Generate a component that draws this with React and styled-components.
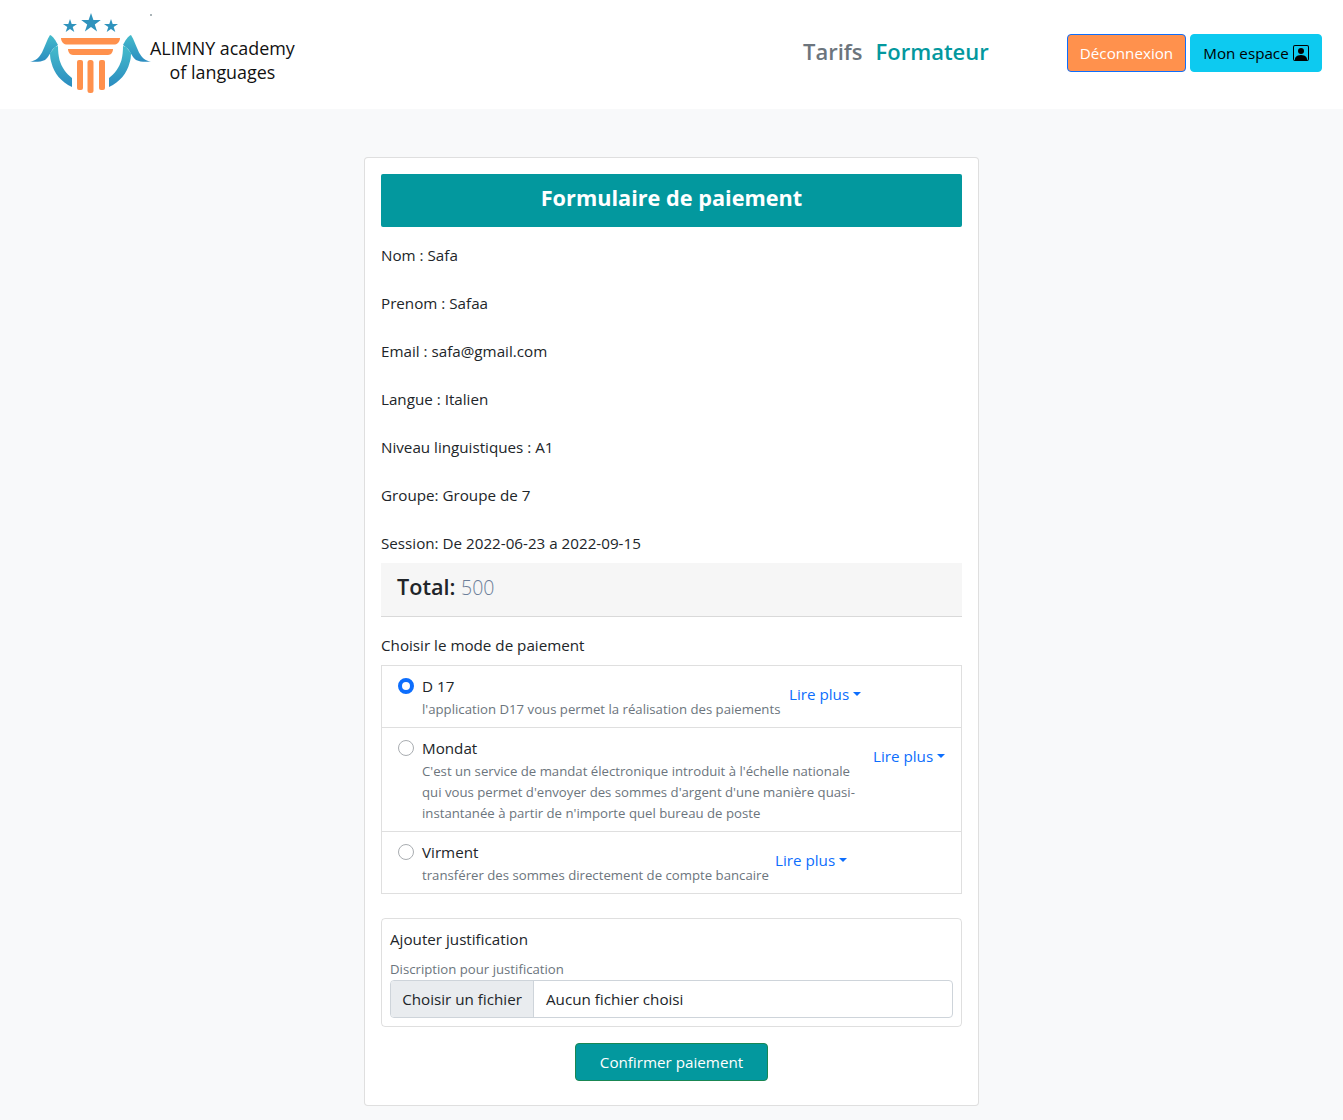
import React from 'react';
import styled, { createGlobalStyle } from 'styled-components';

const fields = [
  'Nom : Safa',
  'Prenom : Safaa',
  'Email : safa@gmail.com',
  'Langue : Italien',
  'Niveau linguistiques : A1',
  'Groupe: Groupe de 7',
];

const modes = [
  {
    name: 'D 17',
    checked: true,
    textWidth: '359px',
    lines: ["l'application D17 vous permet la réalisation des paiements"],
  },
  {
    name: 'Mondat',
    textWidth: '443px',
    lines: [
      "C'est un service de mandat électronique introduit à l'échelle nationale",
      "qui vous permet d'envoyer des sommes d'argent d'une manière quasi-",
      "instantanée à partir de n'importe quel bureau de poste",
    ],
  },
  {
    name: 'Virment',
    textWidth: '345px',
    lines: ['transférer des sommes directement de compte bancaire'],
  },
];

// viewBox uses page coordinates, so it reads straight off the screenshot
function Logo() {
  return (
    <svg width="122" height="84" viewBox="30 12 122 84" aria-hidden="true">
      <defs>
        <linearGradient id="wing" x1="0" y1="0" x2="0" y2="1">
          <stop offset="0" stopColor="#45bccb" />
          <stop offset="1" stopColor="#2b8cc0" />
        </linearGradient>
      </defs>
      <g fill="#2f93bd">
        <path d="M70 19l1.7 5h5.3l-4.3 3.1 1.6 5-4.3-3.1-4.3 3.1 1.6-5-4.3-3.1h5.3z" />
        <path d="M91 13l2.4 7h7.4l-6 4.4 2.3 7.1-6.1-4.4-6.1 4.4 2.3-7.1-6-4.4h7.4z" />
        <path d="M111 19l1.7 5h5.3l-4.3 3.1 1.6 5-4.3-3.1-4.3 3.1 1.6-5-4.3-3.1h5.3z" />
      </g>
      <g fill="url(#wing)">
        <path d="M30 61.5c6-.5 9-4 12-9 3-6 5-13 8-17.5 3 1 6 6 8 10l-5 4c-3 4-5 9-8 11-4 2-10 2-15 1.5z" />
        <path d="M50 53l5-6 3-1c0 5 .5 10 1.5 14 2 7 7 14 12.5 18v9C61 82 54 73 51.5 63c-1-3-1.5-6-1.5-10z" />
        <path d="M151 61.5c-6-.5-9-4-12-9-3-6-5-13-8-17.5-3 1-6 6-8 10l5 4c3 4 5 9 8 11 4 2 10 2 15 1.5z" />
        <path d="M131 53l-5-6-3-1c0 5-.5 10-1.5 14-2 7-7 14-12.5 18v9c11-5 18-14 20.5-24 1-3 1.5-6 1.5-10z" />
      </g>
      <g fill="#ff914d">
        <path d="M61 38h59c0 3-2 6-5 6.5H66c-3-.5-5-3.5-5-6.500z" />
        <path d="M68 49h45c0 3-2 6-5 6H73c-3 0-5-3-5-6z" />
        <rect x="77" y="60" width="6" height="30" rx="2" />
        <rect x="87.5" y="60" width="6" height="33" rx="2.5" />
        <rect x="99" y="60" width="6" height="30" rx="2" />
      </g>
    </svg>
  );
}

function CaretToggle() {
  return (
    <ReadMore>
      Lire plus<Caret />
    </ReadMore>
  );
}

export default function App() {
  return (
    <>
      <GlobalStyle />
      <Navbar>
        <Brand>
          <Logo />
          <BrandText>
            <span>ALIMNY academy</span>
            <span>of languages</span>
          </BrandText>
          <Speck />
        </Brand>
        <NavLinks>
          <NavLink>Tarifs</NavLink>
          <NavLink $active>Formateur</NavLink>
        </NavLinks>
        <NavButtons>
          <LogoutButton>Déconnexion</LogoutButton>
          <SpaceButton>
            Mon espace
            <svg width="16" height="16" viewBox="0 0 16 16" fill="currentColor" aria-hidden="true">
              <path d="M8 9a3 3 0 1 0 0-6 3 3 0 0 0 0 6z" />
              <path d="M2 0a2 2 0 0 0-2 2v12a2 2 0 0 0 2 2h12a2 2 0 0 0 2-2V2a2 2 0 0 0-2-2H2zm12 1a1 1 0 0 1 1 1v12a1 1 0 0 1-1 1v-1c0-1-1-4-6-4s-6 3-6 4v1a1 1 0 0 1-1-1V2a1 1 0 0 1 1-1h12z" />
            </svg>
          </SpaceButton>
        </NavButtons>
      </Navbar>
      <Page>
        <Card>
          <Title>Formulaire de paiement</Title>
          {fields.map((f) => (
            <Field key={f}>{f}</Field>
          ))}
          <SessionLine>Session: De 2022-06-23 a 2022-09-15</SessionLine>
          <TotalBar>
            <strong>Total:</strong> <TotalValue>500</TotalValue>
          </TotalBar>
          <ModeLabel>Choisir le mode de paiement</ModeLabel>
          <ModeList>
            {modes.map((m) => (
              <ModeItem key={m.name}>
                <Radio $checked={m.checked} />
                <ModeBody $width={m.textWidth}>
                  <ModeName>{m.name}</ModeName>
                  {m.lines.map((l) => (
                    <ModeText key={l}>{l}</ModeText>
                  ))}
                </ModeBody>
                <CaretToggle />
              </ModeItem>
            ))}
          </ModeList>
          <JustifBox>
            <JustifTitle>Ajouter justification</JustifTitle>
            <JustifHint>Discription pour justification</JustifHint>
            <FileInput>
              <FileButton>Choisir un fichier</FileButton>
              <FileName>Aucun fichier choisi</FileName>
            </FileInput>
          </JustifBox>
          <ConfirmRow>
            <ConfirmButton>Confirmer paiement</ConfirmButton>
          </ConfirmRow>
        </Card>
      </Page>
    </>
  );
}

const GlobalStyle = createGlobalStyle`
  * { box-sizing: border-box; }
  body {
    margin: 0;
    background: #f8f9fa;
    color: #212529;
    font-family: "Open Sans", "Noto Sans", "Liberation Sans", sans-serif;
    font-size: 15.2px;
    line-height: 24px;
  }
`;

const Navbar = styled.nav`
  height: 109px;
  background: #fff;
  display: flex;
  align-items: center;
  padding: 0 21px 0 30px;
`;

const Brand = styled.div`
  position: relative;
  display: flex;
  align-items: center;
  width: 773px;
  margin-top: -1px;
`;

const BrandText = styled.div`
  display: flex;
  flex-direction: column;
  align-items: center;
  margin: 12px 0 0 -2px;
  color: #111;
  font-size: 17.9px;
  line-height: 24.5px;
`;

const Speck = styled.i`
  position: absolute;
  left: 120px;
  top: 2px;
  width: 2px;
  height: 2px;
  background: #aab4b8;
`;

const NavLinks = styled.div`
  display: flex;
  gap: 13px;
  width: 264px;
  margin-top: -8px;
`;

const NavLink = styled.a`
  color: ${(p) => (p.$active ? '#03989e' : '#6c757d')};
  font-size: 22px;
  font-weight: 600;
  line-height: 32px;
`;

const NavButtons = styled.div`
  display: flex;
  gap: 4px;
  margin-top: -3px;
`;

const BaseButton = styled.button`
  height: 38px;
  border-radius: 4px;
  font: inherit;
  font-size: 15.2px;
  display: inline-flex;
  align-items: center;
`;

const LogoutButton = styled(BaseButton)`
  width: 119px;
  justify-content: center;
  color: #fff;
  background: #ff914d;
  border: 1px solid #0d6efd;
`;

const SpaceButton = styled(BaseButton)`
  width: 132px;
  justify-content: center;
  gap: 4px;
  color: #000;
  background: #0dcaf0;
  border: 1px solid #0dcaf0;
`;

const Page = styled.main`
  display: flex;
  justify-content: center;
  padding-top: 48px;
`;

const Card = styled.section`
  width: 615px;
  height: 949px;
  padding: 16px;
  background: #fff;
  border: 1px solid rgba(0, 0, 0, 0.125);
  border-radius: 4px;
`;

const Title = styled.h1`
  margin: 0 0 16px;
  height: 53px;
  background: #03989e;
  color: #fff;
  border-radius: 2px;
  font-size: 21.7px;
  font-weight: 700;
  line-height: 47px;
  text-align: center;
`;

const Field = styled.p`
  margin: 0 0 24px;
`;

const SessionLine = styled.p`
  margin: 0 0 8px;
`;

const TotalBar = styled.div`
  height: 54px;
  padding: 0 16px;
  background: #f6f6f6;
  border-bottom: 1px solid #d9d9d9;
  font-size: 21.6px;
  line-height: 47px;
  strong { font-weight: 600; }
`;

const TotalValue = styled.span`
  color: #6c7f99;
  font-size: 19.5px;
  font-weight: 300;
`;

const ModeLabel = styled.p`
  margin: 16px 0 8px;
`;

const ModeList = styled.div`
  border: 1px solid rgba(0, 0, 0, 0.125);
`;

const ModeItem = styled.div`
  display: flex;
  padding: 8px 16px;
  & + & { border-top: 1px solid rgba(0, 0, 0, 0.125); }
`;

const Radio = styled.span`
  flex: none;
  width: 16px;
  height: 16px;
  margin-top: 4px;
  border-radius: 50%;
  background: #fff;
  border: ${(p) => (p.$checked ? '4px solid #0d6efd' : '1px solid #a9adb1')};
`;

const ModeBody = styled.div`
  width: ${(p) => p.$width};
  margin-left: 8px;
  flex: none;
`;

const ModeName = styled.div`
  margin-bottom: 1px;
`;

const ModeText = styled.div`
  color: #6c757d;
  font-size: 13.2px;
  line-height: 21px;
  white-space: nowrap;
  &:last-child { margin-bottom: -1px; }
`;

const ReadMore = styled.a`
  display: inline-flex;
  align-items: center;
  height: 24px;
  margin: 8px 0 0 8px;
  color: #0d6efd;
  white-space: nowrap;
`;

const Caret = styled.i`
  margin-left: 4px;
  border-top: 4.5px solid;
  border-left: 4.5px solid transparent;
  border-right: 4.5px solid transparent;
`;

const JustifBox = styled.div`
  margin-top: 24px;
  height: 109px;
  padding: 8px;
  border: 1px solid rgba(0, 0, 0, 0.125);
  border-radius: 4px;
`;

const JustifTitle = styled.div`
  margin-bottom: 8px;
`;

const JustifHint = styled.div`
  color: #6c757d;
  font-size: 13.2px;
  line-height: 21px;
`;

const FileInput = styled.div`
  display: flex;
  height: 38px;
  border: 1px solid #ced4da;
  border-radius: 4px;
  overflow: hidden;
`;

const FileButton = styled.span`
  width: 143px;
  padding: 6px 0;
  text-align: center;
  background: #e9ecef;
  border-right: 1px solid #ced4da;
  white-space: nowrap;
`;

const FileName = styled.span`
  padding: 6px 12px;
`;

const ConfirmRow = styled.div`
  display: flex;
  justify-content: center;
  margin-top: 16px;
`;

const ConfirmButton = styled(BaseButton)`
  width: 193px;
  justify-content: center;
  color: #fff;
  background: #03989e;
  border: 1px solid #198754;
`;
